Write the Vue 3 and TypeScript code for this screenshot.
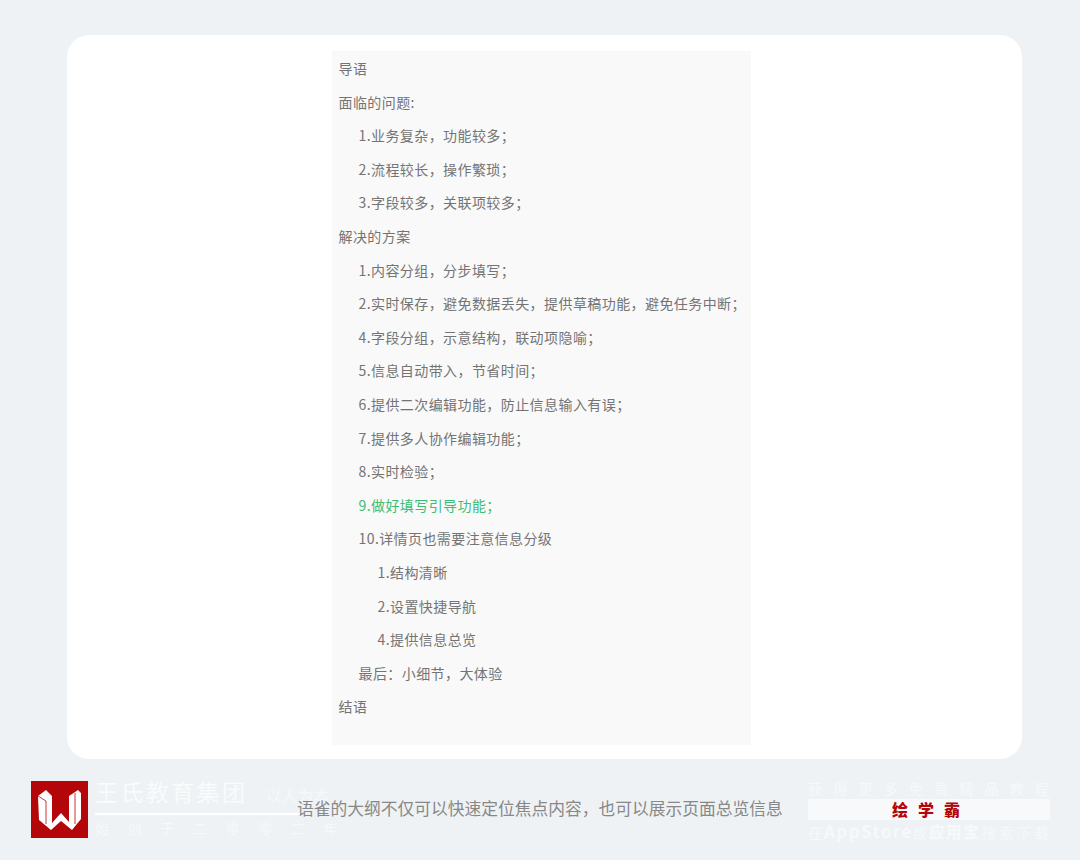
<script setup lang="ts">
interface Row { text: string; level: number; green?: boolean }
const rows: Row[] = [
  { text: '导语', level: 0 },
  { text: '面临的问题:', level: 0 },
  { text: '1.业务复杂，功能较多；', level: 1 },
  { text: '2.流程较长，操作繁琐；', level: 1 },
  { text: '3.字段较多，关联项较多；', level: 1 },
  { text: '解决的方案', level: 0 },
  { text: '1.内容分组，分步填写；', level: 1 },
  { text: '2.实时保存，避免数据丢失，提供草稿功能，避免任务中断；', level: 1 },
  { text: '4.字段分组，示意结构，联动项隐喻；', level: 1 },
  { text: '5.信息自动带入，节省时间；', level: 1 },
  { text: '6.提供二次编辑功能，防止信息输入有误；', level: 1 },
  { text: '7.提供多人协作编辑功能；', level: 1 },
  { text: '8.实时检验；', level: 1 },
  { text: '9.做好填写引导功能；', level: 1, green: true },
  { text: '10.详情页也需要注意信息分级', level: 1 },
  { text: '1.结构清晰', level: 2 },
  { text: '2.设置快捷导航', level: 2 },
  { text: '4.提供信息总览', level: 2 },
  { text: '最后：小细节，大体验', level: 1 },
  { text: '结语', level: 0 },
]
</script>

<template>
  <div class="page">
    <main class="card">
      <section class="doc">
        <p
          v-for="(r, i) in rows"
          :key="i"
          class="row"
          :class="[`lv${r.level}`, { green: r.green }]"
        >{{ r.text }}</p>
      </section>
    </main>
    <footer class="footer">
      <div class="brand">
        <svg class="logo" viewBox="0 0 57 57" width="57" height="57">
          <rect width="57" height="57" fill="#b40608" />
          <path d="M7 15 L15 9 L21 15 L21 42 L30 32 L38 41 L38 15 L47 9 L50 12 L50 38 L41 49 L30 40 L20 49 L8 39 Z" fill="#fff" />
          <path d="M7 15 L15 20 L15 43 M44 12 L44 43" stroke="#b40608" stroke-width="0.8" fill="none" />
        </svg>
        <div class="brand-text">
          <div class="brand-top"><span class="brand-name">王氏教育集团</span><span class="brand-motto">以人为本</span></div>
          <div class="brand-since">始创于二零零二年</div>
        </div>
      </div>
      <div class="promo">
        <div class="promo-line">获得更多免费精品教程</div>
        <div class="promo-bar">绘学霸</div>
        <div class="promo-store"><span class="s1">在</span><b class="latin">AppStore</b><span class="s1">或</span><b class="cn">应用宝</b><span class="s2">搜索下载</span></div>
      </div>
      <div class="subtitle">语雀的大纲不仅可以快速定位焦点内容，也可以展示页面总览信息</div>
    </footer>
  </div>
</template>

<style>
html, body { margin: 0; background: #eef2f5; }
</style>

<style scoped>
.page {
  width: 1080px;
  height: 860px;
  box-sizing: border-box;
  padding-top: 35px;
  background: #eef2f5;
  font-family: "Noto Sans CJK SC", "Noto Sans", sans-serif;
  overflow: hidden;
}
.card {
  width: 955px;
  height: 724px;
  margin-left: 67px;
  box-sizing: border-box;
  padding: 16px 0 0 265px;
  background: #fff;
  border-radius: 22px;
}
.doc {
  width: 419px;
  height: 694px;
  box-sizing: border-box;
  padding: 1px 0 0 6.5px;
  background: #f9f9f9;
}
.row {
  margin: 0;
  height: 33.6px;
  line-height: 33.6px;
  font-size: 14px;
  letter-spacing: 0.42px;
  color: #747474;
  white-space: nowrap;
}
.lv1 { padding-left: 20px; }
.lv2 { padding-left: 39px; }
.green { color: #3dbd73; }
.footer {
  position: relative;
  display: flex;
  justify-content: space-between;
  align-items: flex-start;
  box-sizing: border-box;
  height: 101px;
  padding: 22px 30px 0 31px;
}
.brand { display: flex; gap: 7px; }
.logo { display: block; flex: none; }
.brand-text { width: 235px; margin-top: -2px; }
.brand-top {
  display: flex;
  align-items: flex-start;
  gap: 18px;
  height: 34px;
  width: 205px;
  line-height: 24px;
  border-bottom: 2px solid #fff;
  white-space: nowrap;
}
.brand-name { font-size: 23px; letter-spacing: 2.4px; color: #f9fbfc; }
.brand-motto { margin-top: 8px; font-size: 16px; line-height: 16px; color: #f6f8fa; }
.brand-since {
  margin-top: 3px;
  font-size: 14px;
  line-height: 20px;
  letter-spacing: 18.6px;
  color: #f6f8fa;
  white-space: nowrap;
}
.promo { width: 242px; color: #f6f8fa; }
.promo-line {
  font-size: 14px;
  line-height: 14px;
  height: 18px;
  letter-spacing: 11.2px;
  white-space: nowrap;
}
.promo-bar {
  height: 21px;
  line-height: 21px;
  background: #f8f9fb;
  color: #b40608;
  font-size: 16px;
  font-weight: 900;
  letter-spacing: 10px;
  padding-left: 4px;
  text-align: center;
}
.promo-store {
  font-size: 14px;
  line-height: 22px;
  white-space: nowrap;
}
.s1 { letter-spacing: 2px; }
.s2 { margin-left: 2px; letter-spacing: 3.7px; }
.latin { font-size: 17px; font-weight: 700; letter-spacing: 1.4px; }
.cn { font-size: 16px; font-weight: 900; letter-spacing: 1px; }
.subtitle {
  position: absolute;
  left: 0;
  right: 0;
  top: 37px;
  text-align: center;
  font-size: 16.76px;
  line-height: 24px;
  color: #888888;
  white-space: nowrap;
}
</style>
